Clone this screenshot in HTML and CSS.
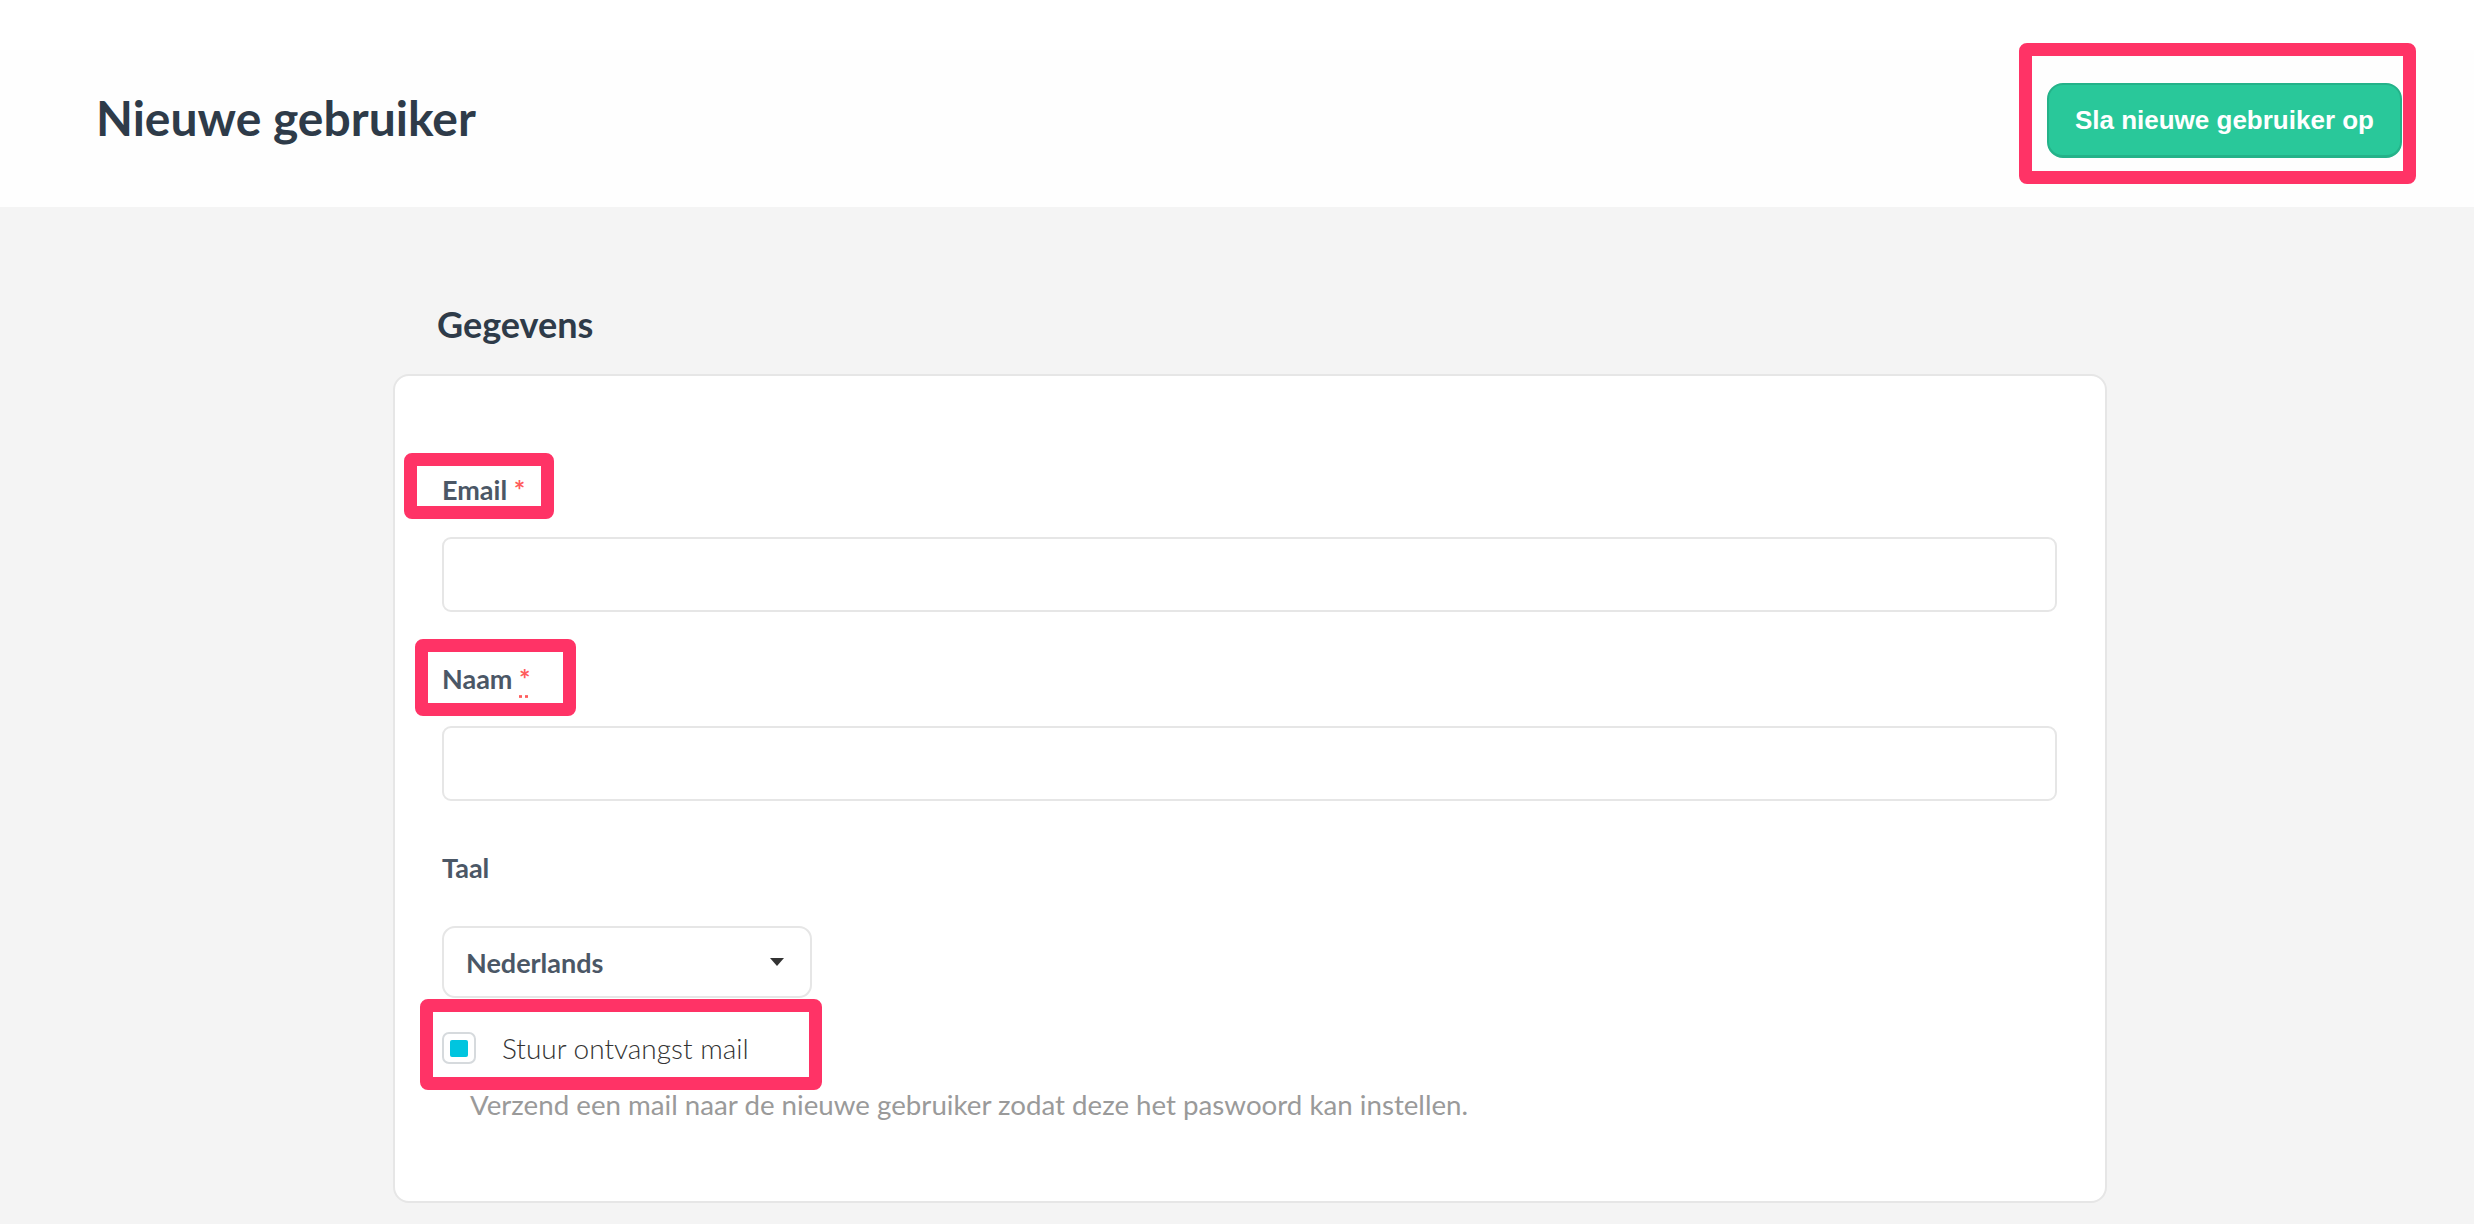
FILE: index.html
```html
<!DOCTYPE html>
<html lang="nl">
<head>
    <meta charset="UTF-8">
    <meta name="viewport" content="width=device-width, initial-scale=1.0">
    <title>Nieuwe gebruiker</title>
    <link rel="stylesheet" href="styles.css">
</head>
<body>
    <header class="page-header">
        <h1 class="page-title">Nieuwe gebruiker</h1>
        <button class="btn-save mark mark-btn" type="button">Sla nieuwe gebruiker op</button>
    </header>

    <main class="page">
        <h2 class="section-title">Gegevens</h2>

        <form class="card">
            <div class="field">
                <label class="field-label mark mark-email" for="email">Email <abbr title="verplicht">*</abbr></label>
                <input class="text-input" type="email" id="email">
            </div>

            <div class="field">
                <label class="field-label mark mark-naam" for="naam">Naam <abbr title="verplicht">*</abbr></label>
                <input class="text-input" type="text" id="naam">
            </div>

            <div class="field field-taal">
                <label class="field-label">Taal</label>
                <div class="select">
                    <span>Nederlands</span>
                    <svg class="caret" width="14" height="8" viewBox="0 0 14 8"><path d="M0 0h14L7 8z" fill="#333"/></svg>
                </div>
            </div>

            <label class="check mark mark-check">
                <span class="check-box"><span class="check-fill"></span></span>
                Stuur ontvangst mail
            </label>
            <p class="help">Verzend een mail naar de nieuwe gebruiker zodat deze het paswoord kan instellen.</p>
        </form>
    </main>
</body>
</html>
```

FILE: styles.css
```css
:root {
    --bg: #f4f4f4;
    --card-bg: #ffffff;
    --heading: #2e3b49;
    --label: #4b5766;
    --border: #e6e6e6;
    --green: #29c89a;
    --green-dark: #24b289;
    --mark: #ff3366;
    --red: #ff5c5c;
    --cyan: #00c5df;
}

* {
    margin: 0;
    padding: 0;
    box-sizing: border-box;
}

body {
    font-family: 'Lato', 'Open Sans', sans-serif;
    background: var(--bg);
    color: #333333;
}

/* header */

.page-header {
    height: 207px;
    display: flex;
    align-items: center;
    justify-content: space-between;
    padding: 34px 72px 0 96px;
    background: linear-gradient(#ffffff 0 50px, #fefefe 50px);
}

.page-title {
    font-size: 48px;
    line-height: 58px;
    font-weight: 700;
    color: var(--heading);
    margin-bottom: 6px;
}

.btn-save {
    height: 75px;
    padding: 0 26px;
    background: var(--green);
    border: 2px solid var(--green-dark);
    border-bottom-width: 3px;
    border-radius: 16px;
    color: #ffffff;
    font-family: 'Liberation Sans', Arial, sans-serif;
    font-size: 26px;
    font-weight: 700;
    cursor: pointer;
}

/* annotation boxes */

.mark {
    position: relative;
}

.mark::after {
    content: '';
    position: absolute;
    border: 13px solid var(--mark);
    border-radius: 8px;
    pointer-events: none;
}

.mark-btn::after {
    top: -42px;
    left: -30px;
    right: -16px;
    bottom: -29px;
}

.mark-email::after {
    top: -21px;
    left: -38px;
    right: -29px;
    bottom: -13px;
}

.mark-naam::after {
    top: -24px;
    left: -27px;
    right: -45px;
    bottom: -21px;
}

.mark-check::after {
    top: -33px;
    left: -22px;
    right: -73px;
    bottom: -26px;
}

/* content */

.page {
    width: 1714px;
    margin: 0 auto;
    padding-left: 26px;
    box-sizing: content-box;
}

.section-title {
    font-size: 36px;
    line-height: 44px;
    font-weight: 700;
    color: var(--heading);
    margin: 95px 0 28px 44px;
}

.card {
    background: var(--card-bg);
    border: 2px solid var(--border);
    border-radius: 16px;
    padding: 98px 48px 80px 47px;
}

.field + .field {
    margin-top: 51px;
}

.field-label {
    display: block;
    width: fit-content;
    font-size: 27px;
    line-height: 32px;
    font-weight: 700;
    color: var(--label);
    margin-bottom: 31px;
}

.field-label abbr {
    color: var(--red);
    text-decoration: underline dotted var(--red);
    text-underline-offset: 6px;
}

.text-input {
    display: block;
    width: 100%;
    height: 75px;
    border: 2px solid var(--border);
    border-radius: 9px;
    background: #ffffff;
    font-family: inherit;
    font-size: 27px;
    padding: 0 22px;
}

.field-taal .field-label {
    margin-bottom: 42px;
}

.select {
    width: 370px;
    height: 72px;
    display: flex;
    align-items: center;
    justify-content: space-between;
    padding: 0 26px 0 22px;
    border: 2px solid var(--border);
    border-radius: 13px;
    font-size: 27px;
    font-weight: 700;
    color: var(--label);
}

.caret {
    display: block;
}

.check {
    display: flex;
    width: fit-content;
    align-items: center;
    gap: 26px;
    height: 32px;
    margin-top: 34px;
    font-size: 28px;
    font-weight: 300;
    color: #333333;
}

.check-box {
    width: 34px;
    height: 32px;
    border: 2px solid #d6dadd;
    border-radius: 7px;
    display: flex;
    align-items: center;
    justify-content: center;
}

.check-fill {
    width: 18px;
    height: 17px;
    border-radius: 2px;
    background: var(--cyan);
}

.help {
    margin: 25px 0 0 28px;
    font-size: 27.7px;
    line-height: 32px;
    color: #9a9a9a;
}
```
